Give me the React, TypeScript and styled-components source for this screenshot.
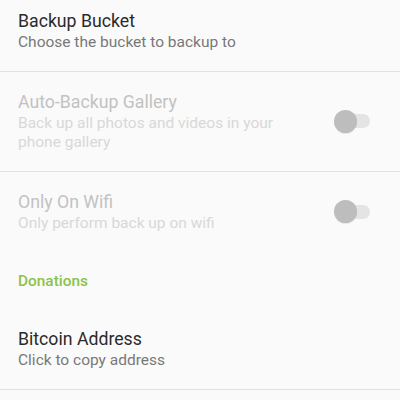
import React from "react";
import styled, { createGlobalStyle } from "styled-components";

const Global = createGlobalStyle`
  html, body { margin: 0; padding: 0; background: #fafafa; }
  body { font-family: Roboto, "Noto Sans", Arial, sans-serif; overflow: hidden; }
`;

const Screen = styled.div`
  width: 400px;
  height: 400px;
  overflow: hidden;
  background: #fafafa;
`;

const List = styled.div`
  display: flex;
  flex-direction: column;
  margin-top: -9.5px;
`;

const Row = styled.div<{ $divider?: boolean }>`
  display: flex;
  align-items: center;
  padding: 18px 30px 18.5px 18px;
  border-bottom: ${(p) => (p.$divider ? "1px solid #e1e1e1" : "none")};
`;

const TextCol = styled.div`
  flex: 1;
  min-width: 0;
  padding-right: 40px;
`;

const Title = styled.div<{ $disabled?: boolean }>`
  font-size: 17.7px;
  line-height: 24px;
  color: ${(p) => (p.$disabled ? "#c2c2c2" : "#2a2a2a")};
`;

const Summary = styled.div<{ $disabled?: boolean }>`
  font-size: 15.5px;
  line-height: 19.5px;
  color: ${(p) => (p.$disabled ? "#d8d8d8" : "#787878")};
`;

const Category = styled.div`
  padding: 19px 18px 18px;
  font-size: 15.4px;
  line-height: 20px;
  font-weight: 500;
  color: #8bc34a;
`;

const Switch = styled.div`
  position: relative;
  width: 36px;
  height: 23px;
  flex: none;
  display: flex;
  align-items: center;
`;

const Track = styled.div`
  margin-left: 3px;
  width: 33px;
  height: 14px;
  border-radius: 7px;
  background: #e4e4e4;
`;

const Thumb = styled.div`
  position: absolute;
  left: 0;
  top: 0;
  width: 23px;
  height: 23px;
  border-radius: 50%;
  background: #bdbdbd;
  box-shadow: 0 1px 1px rgba(0, 0, 0, 0.08);
`;

const Toggle = () => (
  <Switch>
    <Track />
    <Thumb />
  </Switch>
);

export default function App() {
  return (
    <Screen>
      <Global />
      <List>
        <Row $divider>
          <TextCol>
            <Title>Backup Bucket</Title>
            <Summary>Choose the bucket to backup to</Summary>
          </TextCol>
        </Row>
        <Row $divider>
          <TextCol>
            <Title $disabled>Auto-Backup Gallery</Title>
            <Summary $disabled>Back up all photos and videos in your phone gallery</Summary>
          </TextCol>
          <Toggle />
        </Row>
        <Row>
          <TextCol>
            <Title $disabled>Only On Wifi</Title>
            <Summary $disabled>Only perform back up on wifi</Summary>
          </TextCol>
          <Toggle />
        </Row>
        <Category>Donations</Category>
        <Row $divider>
          <TextCol>
            <Title>Bitcoin Address</Title>
            <Summary>Click to copy address</Summary>
          </TextCol>
        </Row>
      </List>
    </Screen>
  );
}
